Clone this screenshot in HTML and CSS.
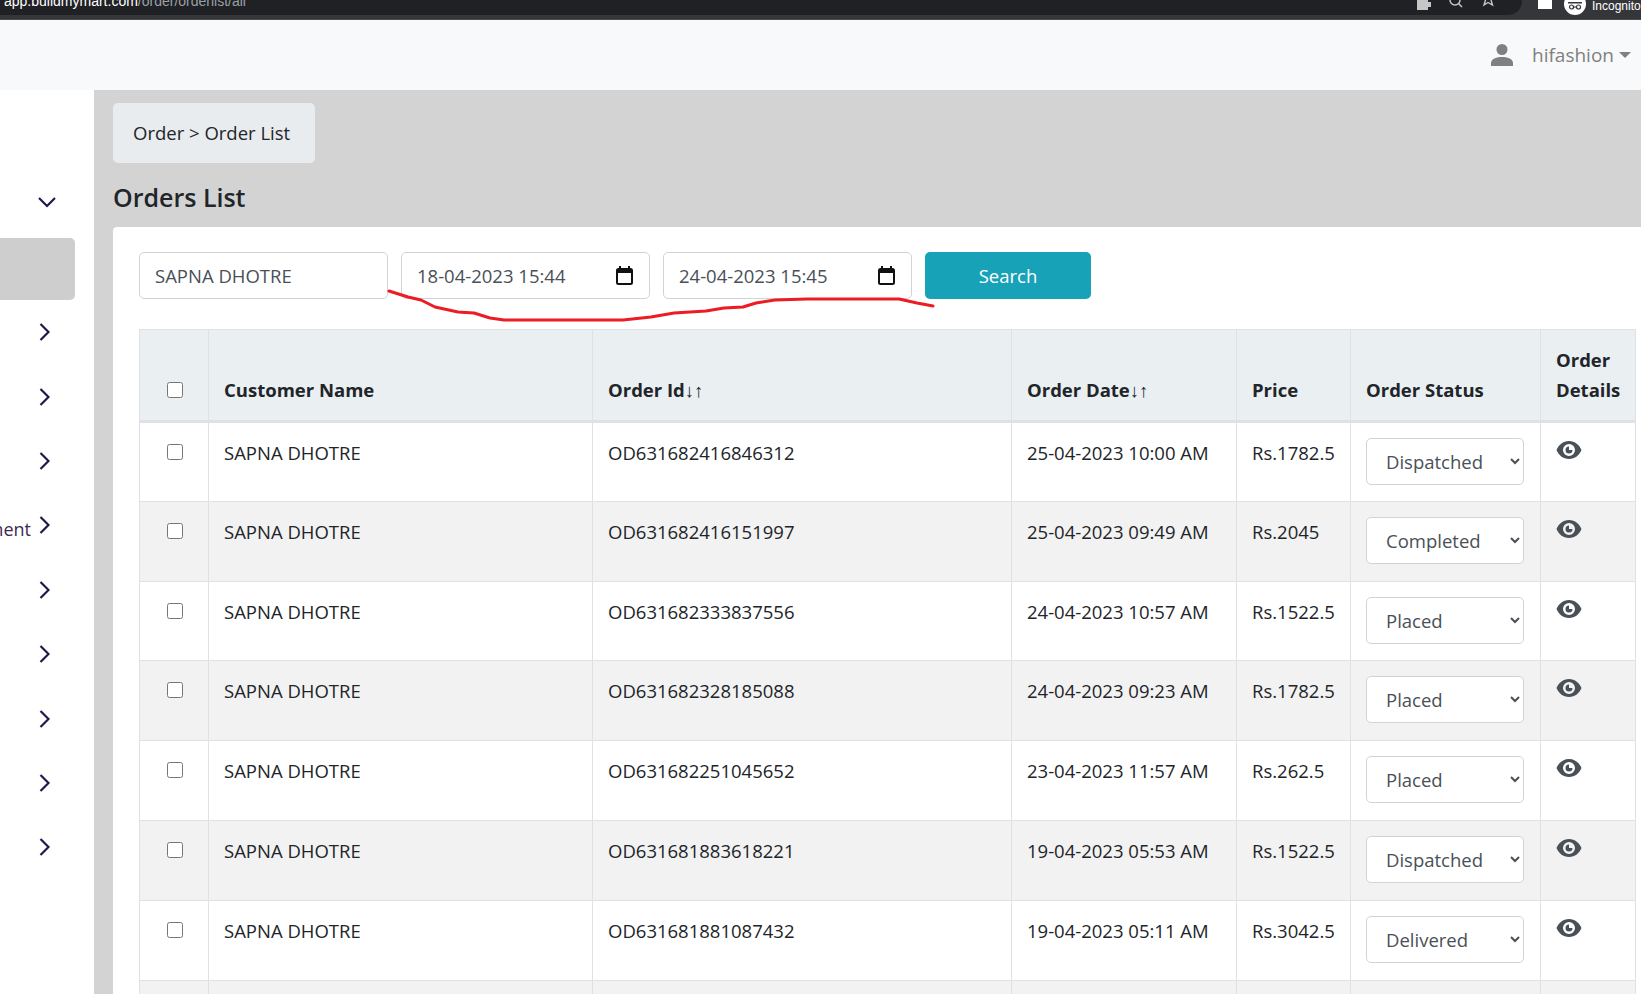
FILE: index.html
```html
<!DOCTYPE html>
<html lang="en">
<head>
  <meta charset="UTF-8">
  <meta name="viewport" content="width=device-width, initial-scale=1.0">
  <title>Orders List</title>
  <link rel="stylesheet" href="styles.css">
</head>
<body>
  <!-- browser toolbar, cut off at the top of the capture -->
  <div class="browser-bar">
    <div class="omnibox">
      <span class="url"><b>app.buildmymart.com</b>/order/orderlist/all</span>
      <div class="omnibox-icons">
        <svg width="16" height="16" viewBox="0 0 16 16"><path fill="#c4c7c5" d="M1 1h4V0h4v1h3v3h3v5h-3v3H1z"/></svg>
        <svg width="16" height="16" viewBox="0 0 16 16"><circle cx="7" cy="2" r="5" fill="none" stroke="#c4c7c5" stroke-width="1.5"/><path stroke="#c4c7c5" stroke-width="1.5" d="M10.5 5.5 14 9"/></svg>
        <svg width="16" height="16" viewBox="0 0 16 16"><path fill="none" stroke="#c4c7c5" stroke-width="1.4" d="M3 -2h10l-2 4 1.500 5L8 4.500 4 7l1.500-5z"/></svg>
      </div>
    </div>
    <div class="bar-square"></div>
    <div class="incognito-badge">
      <svg width="22" height="19" viewBox="0 0 22 19"><circle cx="11" cy="4" r="11" fill="#fff"/><g fill="none" stroke="#35363a" stroke-width="1.2"><circle cx="7.500" cy="7" r="2"/><circle cx="14.500" cy="7" r="2"/><path d="M9.500 7h3"/></g><path fill="#35363a" d="M4 2h14v1.500H4z"/></svg>
      <span>Incognito</span>
    </div>
  </div>

  <nav class="navbar">
    <svg class="user-icon" width="22" height="22" viewBox="0 0 16 16"><circle cx="8" cy="4" r="4" fill="#808080"/><path fill="#808080" d="M0 16v-2c0-2.700 3-4.500 8-4.500s8 1.800 8 4.500v2z"/></svg>
    <span class="user-name">hifashion</span>
    <span class="caret"></span>
  </nav>

  <div class="layout">
    <aside class="sidebar">
      <div class="side-top">
        <svg width="18" height="11" viewBox="0 0 18 11"><path fill="none" stroke="#1d1a4a" stroke-width="2.200" d="M1 1l8 8 8-8"/></svg>
      </div>
      <div class="side-active"></div>
      <div class="side-item"><svg class="chev" width="11" height="18" viewBox="0 0 11 18"><path d="M1.500 1l8 8-8 8"/></svg></div>
      <div class="side-item"><svg class="chev" width="11" height="18" viewBox="0 0 11 18"><path d="M1.500 1l8 8-8 8"/></svg></div>
      <div class="side-item"><svg class="chev" width="11" height="18" viewBox="0 0 11 18"><path d="M1.500 1l8 8-8 8"/></svg></div>
      <div class="side-item"><span class="side-label">Management</span><svg class="chev" width="11" height="18" viewBox="0 0 11 18"><path d="M1.500 1l8 8-8 8"/></svg></div>
      <div class="side-item"><svg class="chev" width="11" height="18" viewBox="0 0 11 18"><path d="M1.500 1l8 8-8 8"/></svg></div>
      <div class="side-item"><svg class="chev" width="11" height="18" viewBox="0 0 11 18"><path d="M1.500 1l8 8-8 8"/></svg></div>
      <div class="side-item"><svg class="chev" width="11" height="18" viewBox="0 0 11 18"><path d="M1.500 1l8 8-8 8"/></svg></div>
      <div class="side-item"><svg class="chev" width="11" height="18" viewBox="0 0 11 18"><path d="M1.500 1l8 8-8 8"/></svg></div>
      <div class="side-item"><svg class="chev" width="11" height="18" viewBox="0 0 11 18"><path d="M1.500 1l8 8-8 8"/></svg></div>
    </aside>

    <main class="content">
      <div class="breadcrumb">Order &gt; Order List</div>
      <h2 class="page-title">Orders List</h2>

      <section class="card">
        <div class="filters">
          <div class="field">SAPNA DHOTRE</div>
          <div class="field field-date">
            <span>18-04-2023 15:44</span>
            <svg width="17" height="19" viewBox="0 0 17 19"><path d="M4 0v3M13 0v3" stroke="#111" stroke-width="2"/><rect x="1" y="3" width="15" height="15" rx="1.500" fill="none" stroke="#111" stroke-width="2"/><rect x="1" y="3" width="15" height="4" fill="#111"/></svg>
          </div>
          <div class="field field-date">
            <span>24-04-2023 15:45</span>
            <svg width="17" height="19" viewBox="0 0 17 19"><path d="M4 0v3M13 0v3" stroke="#111" stroke-width="2"/><rect x="1" y="3" width="15" height="15" rx="1.500" fill="none" stroke="#111" stroke-width="2"/><rect x="1" y="3" width="15" height="4" fill="#111"/></svg>
          </div>
          <button class="btn-search">Search</button>
        </div>

        <table class="orders">
          <colgroup>
            <col class="c-check"><col class="c-name"><col class="c-id"><col class="c-date"><col class="c-price"><col class="c-status"><col class="c-view">
          </colgroup>
          <thead>
            <tr>
              <th class="check-cell"><input type="checkbox"></th>
              <th>Customer Name</th>
              <th>Order Id↓↑</th>
              <th>Order Date↓↑</th>
              <th>Price</th>
              <th>Order Status</th>
              <th>Order Details</th>
            </tr>
          </thead>
          <tbody>
            <tr>
              <td class="check-cell"><input type="checkbox"></td>
              <td>SAPNA DHOTRE</td><td>OD631682416846312</td><td>25-04-2023 10:00 AM</td><td>Rs.1782.5</td>
              <td><select><option>Dispatched</option></select></td>
              <td><svg class="eye" width="26" height="20" viewBox="0 0 26 20"><path fill-rule="evenodd" d="M13 1C7 1 2.500 5 .5 10c2 5 6.500 9 12.500 9s10.500-4 12.500-9C23.500 5 19 1 13 1zm0 3a6 6 0 1 1 0 12 6 6 0 0 1 0-12z"/><path d="M13 6.500a3.500 3.500 0 1 0 3.500 3.500h-3.500z"/></svg></td>
            </tr>
            <tr>
              <td class="check-cell"><input type="checkbox"></td>
              <td>SAPNA DHOTRE</td><td>OD631682416151997</td><td>25-04-2023 09:49 AM</td><td>Rs.2045</td>
              <td><select><option>Completed</option></select></td>
              <td><svg class="eye" width="26" height="20" viewBox="0 0 26 20"><path fill-rule="evenodd" d="M13 1C7 1 2.500 5 .5 10c2 5 6.500 9 12.500 9s10.500-4 12.500-9C23.500 5 19 1 13 1zm0 3a6 6 0 1 1 0 12 6 6 0 0 1 0-12z"/><path d="M13 6.500a3.500 3.500 0 1 0 3.500 3.500h-3.500z"/></svg></td>
            </tr>
            <tr>
              <td class="check-cell"><input type="checkbox"></td>
              <td>SAPNA DHOTRE</td><td>OD631682333837556</td><td>24-04-2023 10:57 AM</td><td>Rs.1522.5</td>
              <td><select><option>Placed</option></select></td>
              <td><svg class="eye" width="26" height="20" viewBox="0 0 26 20"><path fill-rule="evenodd" d="M13 1C7 1 2.500 5 .5 10c2 5 6.500 9 12.500 9s10.500-4 12.500-9C23.500 5 19 1 13 1zm0 3a6 6 0 1 1 0 12 6 6 0 0 1 0-12z"/><path d="M13 6.500a3.500 3.500 0 1 0 3.500 3.500h-3.500z"/></svg></td>
            </tr>
            <tr>
              <td class="check-cell"><input type="checkbox"></td>
              <td>SAPNA DHOTRE</td><td>OD631682328185088</td><td>24-04-2023 09:23 AM</td><td>Rs.1782.5</td>
              <td><select><option>Placed</option></select></td>
              <td><svg class="eye" width="26" height="20" viewBox="0 0 26 20"><path fill-rule="evenodd" d="M13 1C7 1 2.500 5 .5 10c2 5 6.500 9 12.500 9s10.500-4 12.500-9C23.500 5 19 1 13 1zm0 3a6 6 0 1 1 0 12 6 6 0 0 1 0-12z"/><path d="M13 6.500a3.500 3.500 0 1 0 3.500 3.500h-3.500z"/></svg></td>
            </tr>
            <tr>
              <td class="check-cell"><input type="checkbox"></td>
              <td>SAPNA DHOTRE</td><td>OD631682251045652</td><td>23-04-2023 11:57 AM</td><td>Rs.262.5</td>
              <td><select><option>Placed</option></select></td>
              <td><svg class="eye" width="26" height="20" viewBox="0 0 26 20"><path fill-rule="evenodd" d="M13 1C7 1 2.500 5 .5 10c2 5 6.500 9 12.500 9s10.500-4 12.500-9C23.500 5 19 1 13 1zm0 3a6 6 0 1 1 0 12 6 6 0 0 1 0-12z"/><path d="M13 6.500a3.500 3.500 0 1 0 3.500 3.500h-3.500z"/></svg></td>
            </tr>
            <tr>
              <td class="check-cell"><input type="checkbox"></td>
              <td>SAPNA DHOTRE</td><td>OD631681883618221</td><td>19-04-2023 05:53 AM</td><td>Rs.1522.5</td>
              <td><select><option>Dispatched</option></select></td>
              <td><svg class="eye" width="26" height="20" viewBox="0 0 26 20"><path fill-rule="evenodd" d="M13 1C7 1 2.500 5 .5 10c2 5 6.500 9 12.500 9s10.500-4 12.500-9C23.500 5 19 1 13 1zm0 3a6 6 0 1 1 0 12 6 6 0 0 1 0-12z"/><path d="M13 6.500a3.500 3.500 0 1 0 3.500 3.500h-3.500z"/></svg></td>
            </tr>
            <tr>
              <td class="check-cell"><input type="checkbox"></td>
              <td>SAPNA DHOTRE</td><td>OD631681881087432</td><td>19-04-2023 05:11 AM</td><td>Rs.3042.5</td>
              <td><select><option>Delivered</option></select></td>
              <td><svg class="eye" width="26" height="20" viewBox="0 0 26 20"><path fill-rule="evenodd" d="M13 1C7 1 2.500 5 .5 10c2 5 6.500 9 12.500 9s10.500-4 12.500-9C23.500 5 19 1 13 1zm0 3a6 6 0 1 1 0 12 6 6 0 0 1 0-12z"/><path d="M13 6.500a3.500 3.500 0 1 0 3.500 3.500h-3.500z"/></svg></td>
            </tr>
            <tr>
              <td></td><td></td><td></td><td></td><td></td>
              <td><select><option>Placed</option></select></td>
              <td></td>
            </tr>
          </tbody>
        </table>
      </section>
    </main>
  </div>

  <!-- hand drawn red mark on top of the screenshot -->
  <svg class="scribble" width="1641" height="994" viewBox="0 0 1641 994">
    <path d="M389 291 408 297 421 300 435 307 458 312 474 313 490 318 504 320H623L651 317 674 313 706 311 724 308 743 307 756 303 775 300 807 299H899L917 303 933 306"/>
  </svg>
</body>
</html>
```

FILE: styles.css
```css
* {
  box-sizing: border-box;
}

html, body {
  height: 100%;
}

body {
  margin: 0;
  overflow: hidden;
  font-family: "Open Sans", "Noto Sans", sans-serif;
  font-size: 18.5px;
  line-height: 30px;
  color: #212529;
  background: #fff;
}

/* browser toolbar */
.browser-bar {
  height: 20px;
  display: flex;
  background: #35363a;
  border-bottom: 1px solid #4a4b4f;
  overflow: hidden;
}

.omnibox {
  width: 1522px;
  height: 15px;
  display: flex;
  justify-content: space-between;
  background: #202124;
  border-radius: 0 0 14px 0;
  overflow: hidden;
  padding-right: 26px;
}

.url {
  margin: -9px 0 0 4px;
  font-family: "Liberation Sans", sans-serif;
  font-size: 14px;
  line-height: 20px;
  color: #9aa0a6;
  white-space: nowrap;
}

.url b {
  font-weight: normal;
  color: #fff;
}

.omnibox-icons {
  display: flex;
  gap: 16px;
  margin-top: -2px;
}

.bar-square {
  width: 14px;
  height: 9px;
  margin-left: 16px;
  background: #fff;
  border: 2px solid #fff;
  border-left-width: 2px;
}

.incognito-badge {
  display: flex;
  margin-left: 12px;
  gap: 6px;
  font-family: "Liberation Sans", sans-serif;
  font-size: 12px;
  line-height: 12px;
  color: #fff;
  white-space: nowrap;
}

/* top navbar */
.navbar {
  height: 70px;
  display: flex;
  align-items: center;
  justify-content: flex-end;
  padding-right: 10px;
  background: #f8f9fa;
  color: #808080;
}

.user-icon {
  margin-right: 19px;
}

.user-name {
  font-size: 19px;
}

.caret {
  margin-left: 5px;
  border-top: 6px solid #808080;
  border-left: 6px solid transparent;
  border-right: 6px solid transparent;
}

.layout {
  height: 904px;
  display: flex;
}

/* sidebar */
.sidebar {
  width: 94px;
  flex: none;
  background: #fff;
  overflow: hidden;
}

.side-top {
  height: 148px;
  padding: 107px 0 0 38px;
}

.side-top svg {
  display: block;
}

.side-active {
  width: 75px;
  height: 62px;
  background: #cfcecf;
  border-radius: 0 5px 5px 0;
}

.side-item {
  width: 50px;
  height: 64.4px;
  display: flex;
  align-items: center;
  justify-content: flex-end;
  gap: 8px;
}

.side-label {
  font-size: 18px;
  color: #3c2a55;
  padding-top: 8px;
  white-space: nowrap;
}

.chev {
  flex: none;
}

.chev path {
  fill: none;
  stroke: #1d1a4a;
  stroke-width: 2.2;
}

/* main area */
.content {
  flex: 1;
  min-width: 0;
  padding: 13px 0 0 19px;
  background: #d3d3d3;
}

.breadcrumb {
  width: 202px;
  height: 60px;
  padding: 15px 20px;
  background: #e9ecef;
  border-radius: 5px;
}

.page-title {
  margin: 16px 0 0;
  font-size: 25px;
  font-weight: 600;
  line-height: 36px;
}

.card {
  height: 800px;
  margin-top: 12px;
  padding: 25px 6px 0 26px;
  background: #fff;
  border-radius: 4px 0 0 0;
}

.filters {
  display: flex;
  gap: 13px;
}

.field {
  width: 249px;
  height: 47px;
  display: flex;
  align-items: center;
  justify-content: space-between;
  padding: 0 16px 0 15px;
  border: 1px solid #ced4da;
  border-radius: 5px;
  color: #495057;
}

.btn-search {
  width: 166px;
  height: 47px;
  border: none;
  border-radius: 5px;
  background: #17a2b8;
  color: #fff;
  font: inherit;
}

/* orders table */
.orders {
  width: 1496px;
  margin-top: 30px;
  border-collapse: collapse;
  table-layout: fixed;
}

.c-check { width: 69px; }
.c-name { width: 384px; }
.c-id { width: 419px; }
.c-date { width: 225px; }
.c-price { width: 114px; }
.c-status { width: 190px; }
.c-view { width: 95px; }

.orders th, .orders td {
  padding: 15px;
  border: 2px solid #dee2e6;
  border-width: 1.5px;
  text-align: left;
  vertical-align: top;
}

.orders th {
  vertical-align: bottom;
  font-weight: 700;
  background: #eaeff2;
}

.orders thead th {
  border-bottom-width: 3px;
}

.orders tbody tr {
  height: 79.8px;
}

.orders tbody tr:nth-child(even) {
  background: #f2f2f2;
}

.orders .check-cell {
  padding-left: 27px;
  vertical-align: top;
}

.orders th.check-cell {
  vertical-align: bottom;
  padding-bottom: 22px;
}

input[type="checkbox"] {
  display: block;
  width: 16px;
  height: 16px;
  margin: 6px 0 0;
}

select {
  width: 158px;
  height: 47px;
  padding-left: 15px;
  border: 1px solid #ced4da;
  border-radius: 5px;
  background: #fff;
  color: #495057;
  font: inherit;
  display: block;
}

.eye {
  display: block;
  margin-top: 2px;
  fill: #495057;
}

.scribble {
  position: absolute;
  left: 0;
  top: 0;
  pointer-events: none;
}

.scribble path {
  fill: none;
  stroke: #ed1c24;
  stroke-width: 3;
  stroke-linecap: round;
  stroke-linejoin: round;
}
```
